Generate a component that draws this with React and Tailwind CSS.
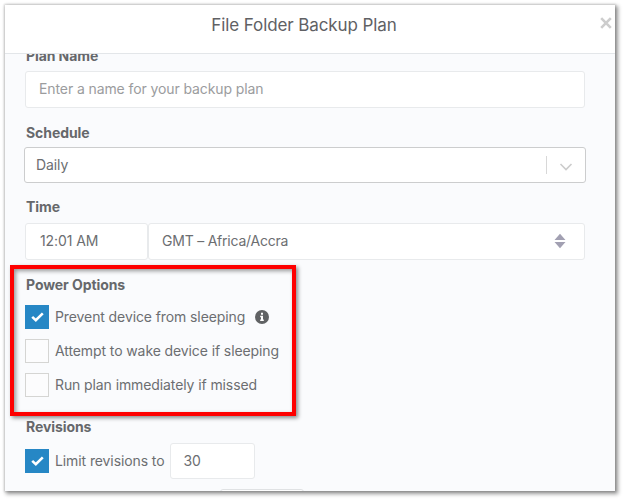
import { useState } from 'react';

const CheckIcon = () => (
    <svg viewBox="0 0 13 10" className="h-[10px] w-[13px]" fill="none" stroke="#fff" strokeWidth="2.6">
        <path d="M1.2 4.9 4.8 8.2 11.8 1.4" />
    </svg>
);

const Label = ({ children }) => (
    <h3 className="ml-px h-5 text-[14px] leading-5 font-bold tracking-[-0.08px] text-[#66686b]">{children}</h3>
);

const Checkbox = ({ checked, onChange, label }) => (
    <label className="flex items-center">
        <input type="checkbox" className="sr-only" checked={checked} onChange={onChange} />
        <span
            className={`flex h-6 w-6 shrink-0 items-center justify-center ${checked ? 'bg-[#2687c5]' : 'border border-[#d5d5d3] bg-[#fcfcfd]'}`}
        >
            {checked && <CheckIcon />}
        </span>
        <span className="ml-[6px] whitespace-nowrap">{label}</span>
    </label>
);

const App = () => {
    const [options, setOptions] = useState({ prevent: true, wake: false, missed: false, limit: true });

    const toggle = (key) => setOptions({ ...options, [key]: !options[key] });

    return (
        <div className="relative h-[500px] w-[624px] overflow-hidden bg-white p-[5px] font-['Inter',sans-serif] text-[14px] leading-5 tracking-[-0.1px] text-[#6c6e71]">
            <div className="flex h-[486px] w-[610px] flex-col overflow-hidden bg-[#fafbfd] shadow-[0_0_2px_1px_rgba(0,0,0,0.14),2px_2px_4px_1px_rgba(0,0,0,0.4)]">
                {/* Header */}
                <div className="flex h-[49px] shrink-0 border-b border-[#e3e6e9] bg-white">
                    <div className="w-[30px]" />
                    <h2 className="flex-1 pt-[8px] pr-[27px] text-center text-[17px] leading-6 font-normal tracking-[-0.1px] text-[#5f6164]">
                        File Folder Backup Plan
                    </h2>
                    <button className="flex h-9 w-[15px] items-center" aria-label="Close">
                        <svg viewBox="0 0 12 12" className="h-3 w-3" stroke="#cdcdcd" strokeWidth="2.6">
                            <path d="m1.2 1.2 9.6 9.6M10.8 1.2l-9.6 9.6" />
                        </svg>
                    </button>
                </div>

                {/* Form */}
                <div className="flex-1 overflow-hidden px-5">
                    <div className="-mt-2">
                        <Label>Plan Name</Label>
                        <input
                            type="text"
                            placeholder="Enter a name for your backup plan"
                            className="mt-[5px] h-[37px] w-[560px] rounded-[3px] border border-[#e8eaec] bg-white px-[13px] pb-[2px] placeholder:text-[#9b9c9e] focus:outline-none"
                        />
                    </div>

                    <div className="mt-[15px]">
                        <Label>Schedule</Label>
                        <div className="-mx-px mt-1 flex h-9 w-[562px] items-center rounded-[3px] border border-[#cccdce] bg-white pl-[11px]">
                            <span className="flex-1">Daily</span>
                            <span className="h-[18px] w-px bg-[#d8d8d8]" />
                            <svg viewBox="0 0 14 8" className="mx-[12px] mt-1 h-2 w-[14px]" fill="none" stroke="#cccccc" strokeWidth="1.6">
                                <path d="m1.5 1 5.5 5.5L12.5 1" />
                            </svg>
                        </div>
                    </div>

                    <div className="mt-[14px]">
                        <Label>Time</Label>
                        <div className="mt-[6px] flex h-[37px] w-[560px]">
                            <div className="flex w-[123px] items-center rounded-[3px] border border-[#e8eaec] bg-white pb-[2px] pl-[14px]">12:01 AM</div>
                            <div className="flex flex-1 items-center rounded-[3px] border border-[#e8eaec] bg-white pr-[18px] pb-[2px] pl-[13px]">
                                <span className="flex-1 tracking-[-0.22px]">GMT – Africa/Accra</span>
                                <svg viewBox="0 0 12 16" className="h-4 w-3" fill="#a2a0b2">
                                    <path d="M0.5 7 6 .8 11.5 7zM.5 9 6 15.2 11.5 9z" />
                                </svg>
                            </div>
                        </div>
                    </div>

                    <div className="mt-[15px]">
                        <Label>Power Options</Label>
                        <div className="mt-[10px] flex flex-col gap-[10px]">
                            <div className="flex items-center">
                                <Checkbox checked={options.prevent} onChange={() => toggle('prevent')} label="Prevent device from sleeping" />
                                <svg viewBox="0 0 14 14" className="ml-[10px] h-[14px] w-[14px]">
                                    <circle cx="7" cy="7" r="7" fill="#606264" />
                                    <path d="M6 2.7h2v2H6zM5.2 5.8H8v3.8h.8V11H5.2V9.6H6V7.2h-.8z" fill="#fff" />
                                </svg>
                            </div>
                            <Checkbox checked={options.wake} onChange={() => toggle('wake')} label="Attempt to wake device if sleeping" />
                            <Checkbox checked={options.missed} onChange={() => toggle('missed')} label="Run plan immediately if missed" />
                        </div>
                    </div>

                    <div className="mt-5">
                        <Label>Revisions</Label>
                        <div className="mt-[6px] flex items-center">
                            <Checkbox checked={options.limit} onChange={() => toggle('limit')} label="Limit revisions to" />
                            <input
                                type="text"
                                defaultValue="30"
                                className="ml-[6px] h-9 w-[85px] rounded-[3px] border border-[#e8eaec] bg-white pb-px pl-[12px] focus:outline-none"
                            />
                        </div>
                        <div className="mt-[10px] ml-[195px] h-9 w-[84px] rounded-[3px] border border-[#e0e2e4] bg-white" />
                    </div>
                </div>
            </div>

            {/* Highlight frame */}
            <div className="pointer-events-none absolute top-[265px] left-[10px] h-[151px] w-[286px] border-4 border-[#fe0000] shadow-[2px_2px_4px_rgba(0,0,0,0.45),inset_2px_2px_4px_rgba(0,0,0,0.4)]" />
        </div>
    );
};

export default App;
